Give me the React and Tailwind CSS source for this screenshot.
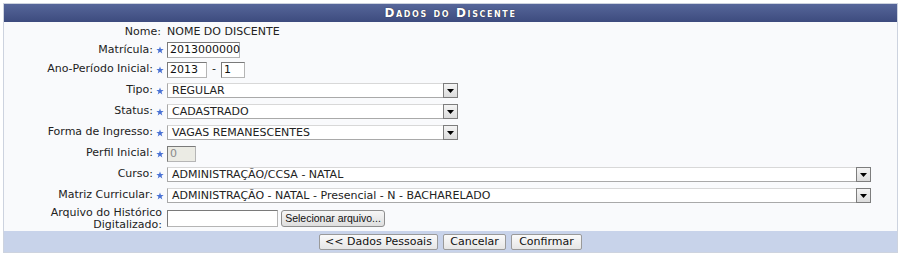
import React from 'react';

const font = { fontFamily: 'Verdana, "DejaVu Sans", sans-serif' };

function Star() {
  return (
    <svg className="ml-[3px] w-[8px] h-[8px] shrink-0" viewBox="0 0 10 10">
      <path d="M5 0.5 L6.2 3.7 L9.6 3.8 L6.9 5.9 L7.9 9.3 L5 7.3 L2.1 9.3 L3.1 5.9 L0.4 3.8 L3.8 3.7 Z" fill="#4a72d4" />
    </svg>
  );
}

function Label({ children, star }) {
  return (
    <div className="flex items-center justify-end pr-[1px]">
      <span>{children}</span>
      {star ? <Star /> : <span className="w-[3px]" />}
    </div>
  );
}

function TextBox({ value, w, disabled }) {
  return (
    <div
      className={`h-[16px] ${w} border border-[#b5b5b5] border-t-[#7a7a7a] border-l-[#7a7a7a] px-[2px] flex items-center leading-[14px] ${
        disabled ? 'bg-[#ebebe4] text-[#8a8a8a]' : 'bg-white text-[#111]'
      }`}
    >
      {value}
    </div>
  );
}

function Select({ value, w }) {
  return (
    <div className={`h-[15px] ${w} bg-white border border-[#a9a9a9] border-t-[#d8d8d8] flex items-center`}>
      <span className="flex-1 pl-[4px] leading-[13px] whitespace-nowrap overflow-hidden">{value}</span>
      <span className="w-[15px] h-[15px] mr-[-1px] border border-[#7d7d7d] bg-gradient-to-b from-[#f4f4f4] to-[#dcdcdc] flex items-center justify-center">
        <svg width="7" height="4" viewBox="0 0 7 4">
          <path d="M0 0 H7 L3.5 4 Z" fill="#000" />
        </svg>
      </span>
    </div>
  );
}

function Row({ h, children }) {
  return <div className={`grid grid-cols-[161px_1fr] gap-x-[2px] items-center ${h}`}>{children}</div>;
}

function Btn({ children, w }) {
  return (
    <button className={`h-[16px] ${w} bg-gradient-to-b from-[#fafafa] to-[#e6e6e6] border border-[#9a9a9a] rounded-[2px] text-[11px] leading-none text-[#111]`} style={font}>
      {children}
    </button>
  );
}

export default function App() {
  return (
    <div className="w-[900px] h-[256px] bg-white pt-[3px] pl-[3px]" style={font}>
      <div className="w-[895px] border border-[#cdd3df] bg-[#f9fafc] text-[11px] text-[#222]">
        {/* cabeçalho */}
        <div className="h-[18px] bg-gradient-to-b from-[#56669a] to-[#3d4b7e] flex items-center justify-center">
          <span className="text-white font-bold text-[12px] tracking-[1.6px] [font-variant:small-caps] [text-shadow:0_0_1px_#222]">
            Dados do Discente
          </span>
        </div>

        <Row h="h-[19px] pt-[2px]">
          <Label>Nome:</Label>
          <span>NOME DO DISCENTE</span>
        </Row>
        <Row h="h-[18px]">
          <Label star>Matrícula:</Label>
          <TextBox value="2013000000" w="w-[73px]" />
        </Row>
        <Row h="h-[21px]">
          <Label star>Ano-Período Inicial:</Label>
          <div className="flex items-center">
            <TextBox value="2013" w="w-[40px]" />
            <span className="mx-[5px]">-</span>
            <TextBox value="1" w="w-[24px]" />
          </div>
        </Row>
        <Row h="h-[21px]">
          <Label star>Tipo:</Label>
          <Select value="REGULAR" w="w-[291px]" />
        </Row>
        <Row h="h-[21px]">
          <Label star>Status:</Label>
          <Select value="CADASTRADO" w="w-[291px]" />
        </Row>
        <Row h="h-[21px]">
          <Label star>Forma de Ingresso:</Label>
          <Select value="VAGAS REMANESCENTES" w="w-[291px]" />
        </Row>
        <Row h="h-[21px]">
          <Label star>Perfil Inicial:</Label>
          <TextBox value="0" w="w-[29px]" disabled />
        </Row>
        <Row h="h-[21px]">
          <Label star>Curso:</Label>
          <Select value="ADMINISTRAÇÃO/CCSA - NATAL" w="w-[704px]" />
        </Row>
        <Row h="h-[21px]">
          <Label star>Matriz Curricular:</Label>
          <Select value="ADMINISTRAÇÃO - NATAL - Presencial - N - BACHARELADO" w="w-[704px]" />
        </Row>
        <Row h="h-[25px]">
          <div className="text-right leading-[12px] pr-[3px]">
            Arquivo do Histórico
            <br />
            Digitalizado:
          </div>
          <div className="flex items-center">
            <div className="h-[17px] w-[111px] bg-white border border-[#b5b5b5] border-t-[#7a7a7a] border-l-[#7a7a7a]" />
            <button
              className="ml-[3px] h-[17px] w-[104px] bg-gradient-to-b from-[#f6f6f6] to-[#dedede] border border-[#8e8e8e] rounded-[3px] text-[10.5px] leading-none text-[#111]"
              style={{ fontFamily: '"Liberation Sans", Arial, sans-serif' }}
            >
              Selecionar arquivo...
            </button>
          </div>
        </Row>

        {/* rodapé */}
        <div className="h-[21px] bg-[#c8d3ea] flex items-center justify-center gap-[5px]">
          <Btn w="w-[119px]">&lt;&lt; Dados Pessoais</Btn>
          <Btn w="w-[63px]">Cancelar</Btn>
          <Btn w="w-[71px]">Confirmar</Btn>
        </div>
      </div>
    </div>
  );
}
